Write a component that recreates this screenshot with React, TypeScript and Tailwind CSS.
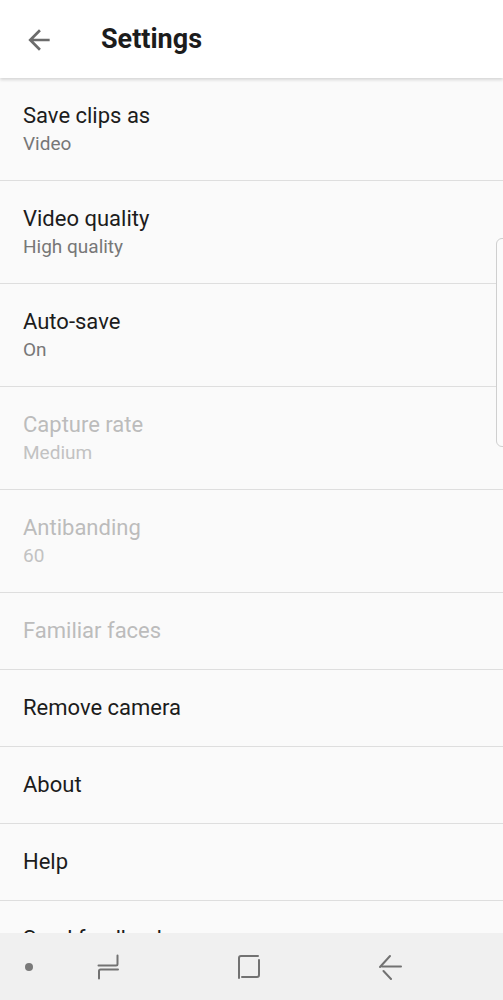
import { ReactNode } from "react";

interface SettingProps {
  title: string;
  value?: string;
  disabled?: boolean;
}

const SettingRow = ({ title, value, disabled }: SettingProps) => {
  const titleColor = disabled ? "text-[#bcbcbc]" : "text-[#1c1c1c]";
  const valueColor = disabled ? "text-[#c2c2c2]" : "text-[#777777]";

  return (
    <div
      className={`flex shrink-0 flex-col justify-center border-b border-[#dedede] pl-[23px] ${
        value ? "h-[103px] pt-[1px]" : "h-[77px]"
      }`}
    >
      <span className={`text-[22px] leading-[28px] ${titleColor}`}>{title}</span>
      {value && (
        <span className={`text-[19px] leading-[28px] ${valueColor}`}>{value}</span>
      )}
    </div>
  );
};

const NavIcon = ({ children, className }: { children: ReactNode; className: string }) => (
  <svg
    className={className}
    width="24"
    height="26"
    viewBox="0 0 24 26"
    fill="none"
    stroke="#727272"
    strokeWidth="2"
    strokeLinecap="round"
    strokeLinejoin="round"
  >
    {children}
  </svg>
);

const settings: SettingProps[] = [
  { title: "Save clips as", value: "Video" },
  { title: "Video quality", value: "High quality" },
  { title: "Auto-save", value: "On" },
  { title: "Capture rate", value: "Medium", disabled: true },
  { title: "Antibanding", value: "60", disabled: true },
  { title: "Familiar faces", disabled: true },
  { title: "Remove camera" },
  { title: "About" },
  { title: "Help" },
  { title: "Send feedback" },
];

export default function App() {
  return (
    <div
      className="relative flex h-[1000px] w-full flex-col overflow-hidden bg-[#fafafa]"
      style={{ fontFamily: "Roboto, 'Noto Sans', sans-serif" }}
    >
      {/* top bar */}
      <header className="z-10 flex h-[78px] shrink-0 items-center bg-white pt-[1px] shadow-[0_2px_3px_rgba(0,0,0,0.14)]">
        <svg className="ml-[23px]" width="32" height="32" viewBox="0 0 24 24" fill="#6b6b6b">
          <path d="M20 11H7.83l5.59-5.59L12 4l-8 8 8 8 1.41-1.41L7.83 13H20v-2z" />
        </svg>
        <h1 className="ml-[46px] text-[27px] font-bold leading-none text-[#1c1c1c]">Settings</h1>
      </header>

      <main className="flex flex-1 flex-col overflow-hidden">
        {settings.map((item) => (
          <SettingRow key={item.title} {...item} />
        ))}
      </main>

      {/* scroll indicator */}
      <div className="absolute right-[-8px] top-[238px] h-[209px] w-[15px] rounded-[6px] border border-[#cfcfcf] bg-[#fbfbfb]" />

      {/* system nav bar */}
      <nav className="flex h-[67px] shrink-0 items-center bg-[#f0f0f0]">
        <span className="ml-[25px] h-[8px] w-[8px] rounded-full bg-[#7a7a7a]" />
        <NavIcon className="ml-[64px]">
          <path d="M1.5 11.5H19Q20.5 11.5 20.5 10V1.5" />
          <path d="M21 15.5H3.5Q2 15.5 2 17V24.5" />
        </NavIcon>
        <NavIcon className="ml-[116px]">
          <path d="M2 24V4Q2 2 4 2H21" />
          <path d="M22 6V21Q22 23 20 23H5" />
        </NavIcon>
        <NavIcon className="ml-[117px]">
          <path d="M2 13L12 2" />
          <path d="M4 12.5H23" />
          <path d="M5.5 17L13 25" />
        </NavIcon>
      </nav>
    </div>
  );
}
